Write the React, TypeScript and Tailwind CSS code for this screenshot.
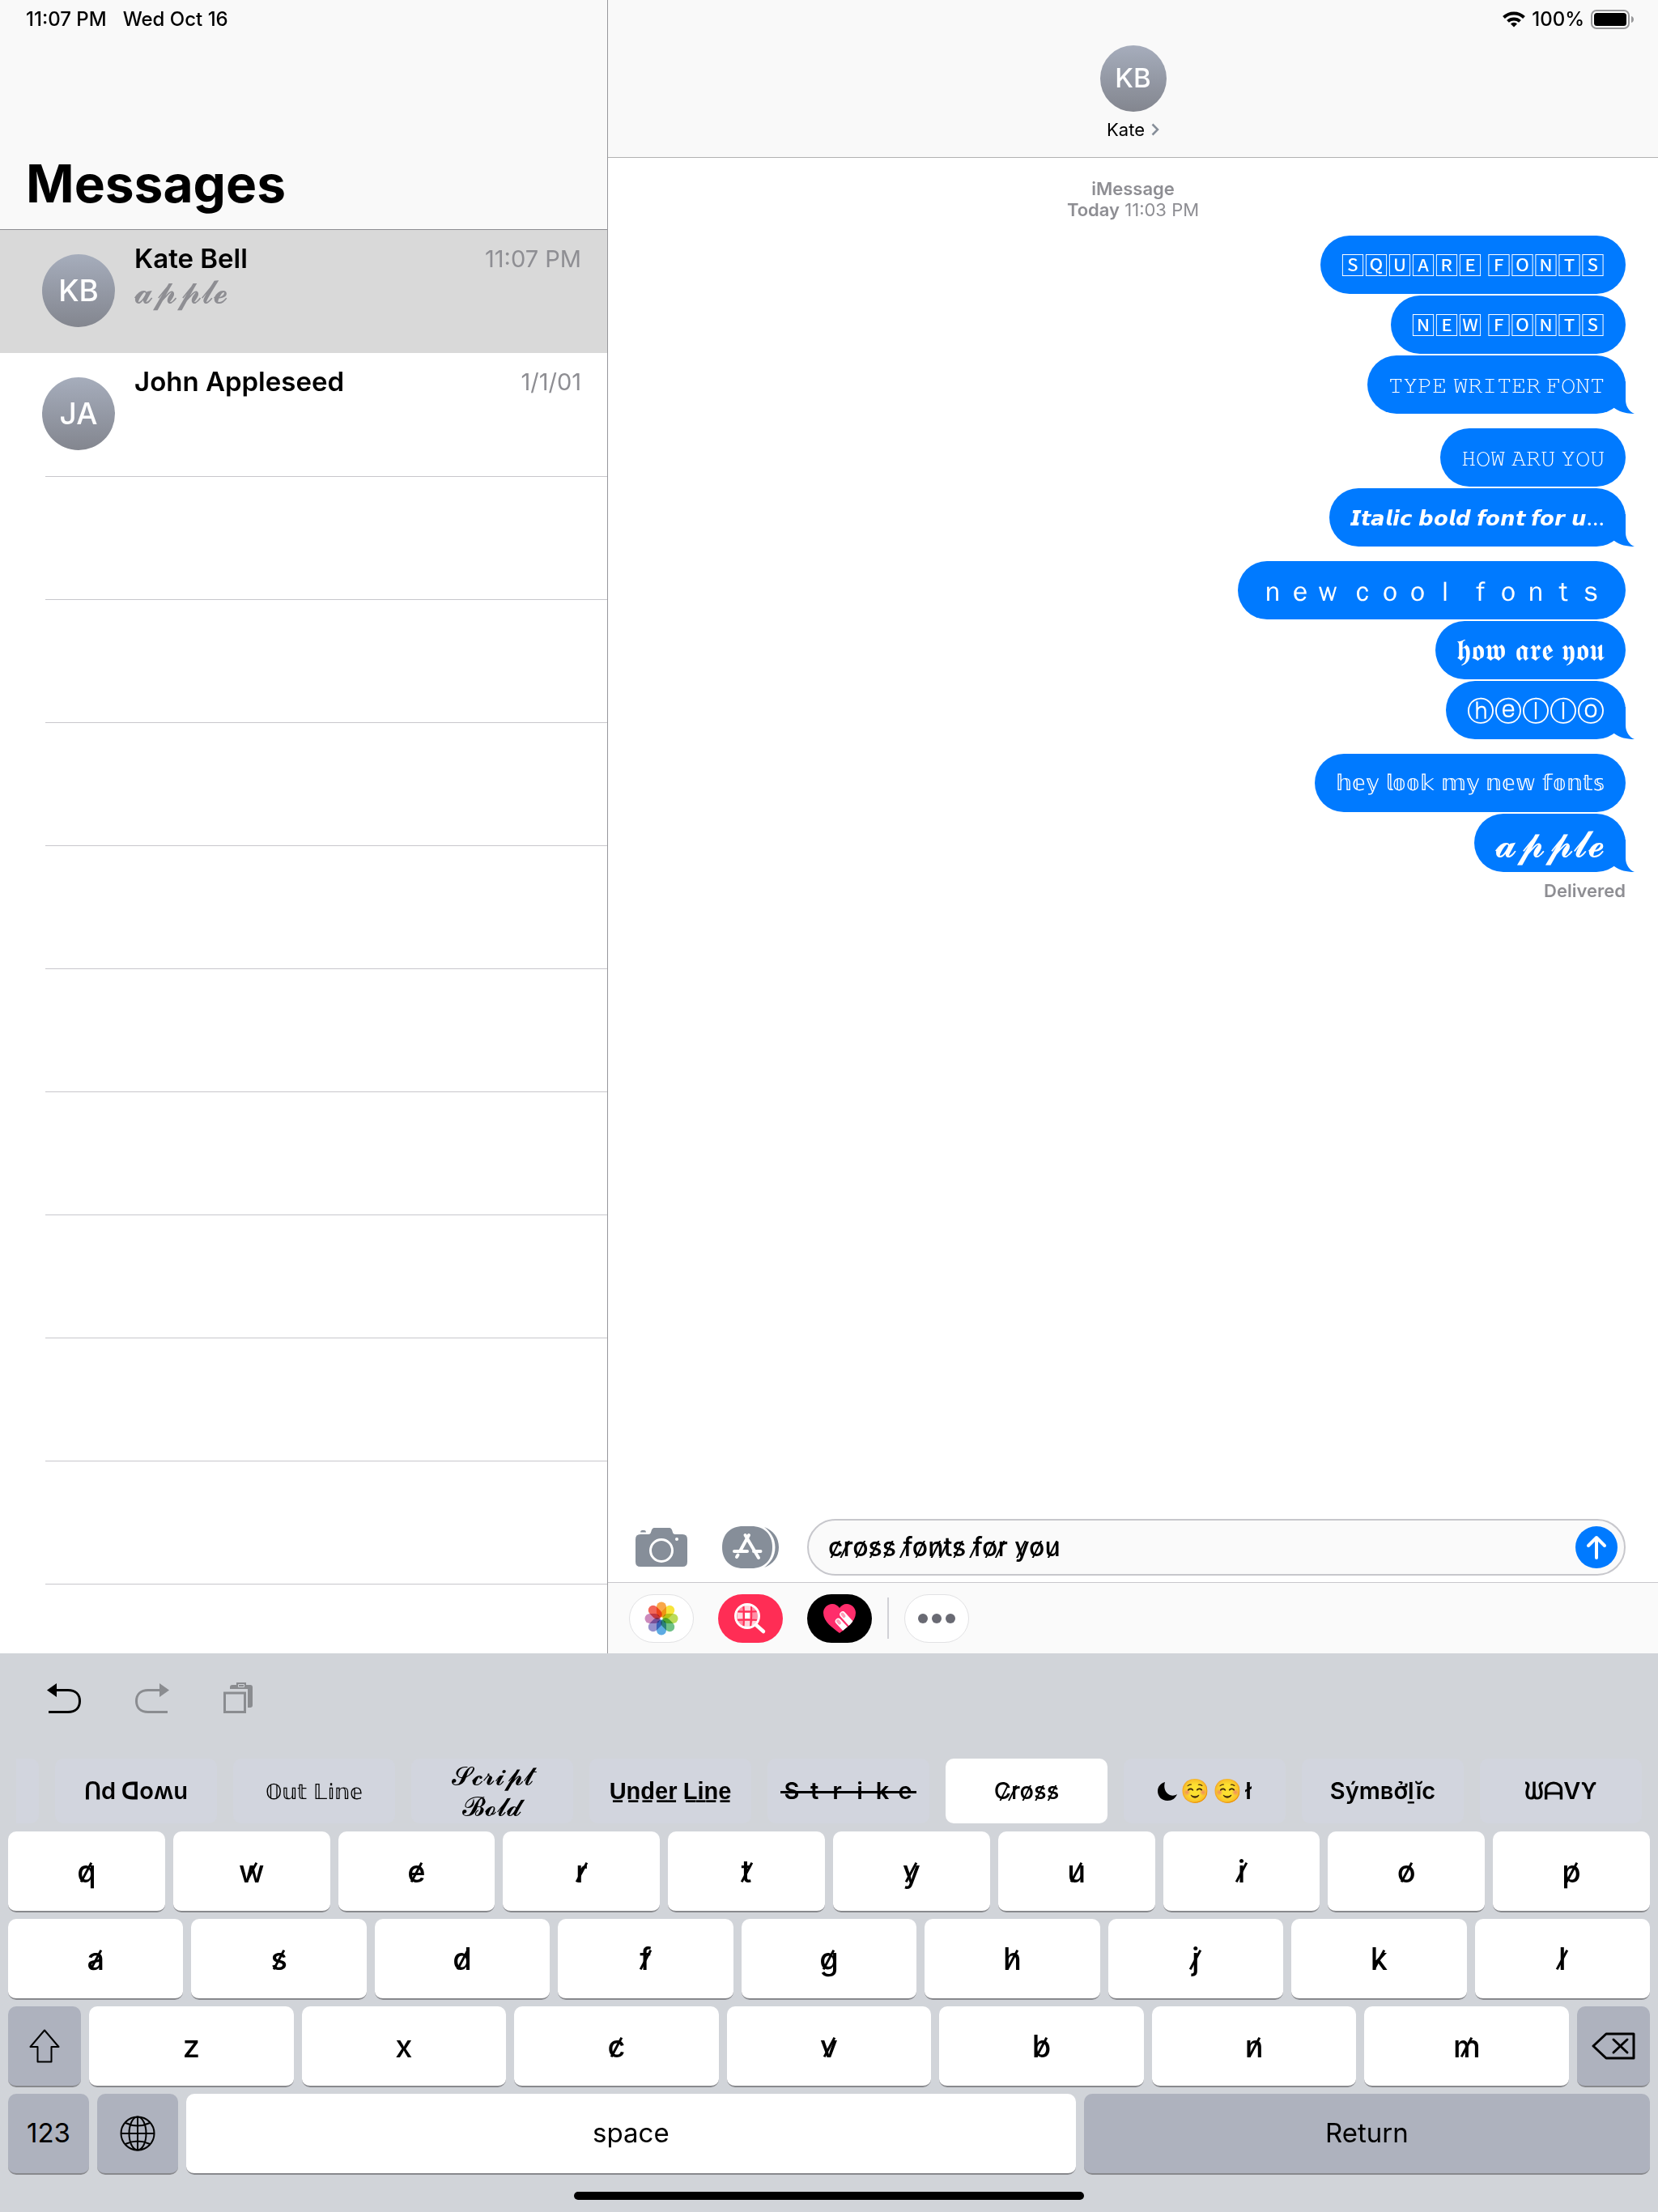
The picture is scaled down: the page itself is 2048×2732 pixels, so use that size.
import React, { useState } from 'react';
import clsx from 'clsx';

interface Conversation {
    id: string;
    initials: string;
    name: string;
    time: string;
    preview?: string;
}

interface Message {
    text: string;
    className: string;
}

const conversations: Conversation[] = [
    { id: 'kate', initials: 'KB', name: 'Kate Bell', time: '11:07 PM', preview: '𝓪𝓹𝓹𝓵𝓮' },
    { id: 'john', initials: 'JA', name: 'John Appleseed', time: '1/1/01' },
];

// Messages sent close together share a group, only the last one has a tail
const messageGroups: Message[][] = [
    [
        { text: '🅂🅀🅄🄰🅁🄴 🄵🄾🄽🅃🅂', className: "font-['Noto_Sans_CJK_JP',sans-serif] text-[29px]" },
        { text: '🄽🄴🅆 🄵🄾🄽🅃🅂', className: "font-['Noto_Sans_CJK_JP',sans-serif] text-[29px]" },
        { text: '𝚃𝚈𝙿𝙴 𝚆𝚁𝙸𝚃𝙴𝚁 𝙵𝙾𝙽𝚃', className: 'text-[26px]' },
    ],
    [
        { text: '𝙷𝙾𝚆 𝙰𝚁𝚄 𝚈𝙾𝚄', className: 'text-[26px]' },
        { text: '𝙄𝙩𝙖𝙡𝙞𝙘 𝙗𝙤𝙡𝙙 𝙛𝙤𝙣𝙩 𝙛𝙤𝙧 𝙪…', className: 'text-[26px]' },
    ],
    [
        { text: 'ｎｅｗ ｃｏｏｌ ｆｏｎｔｓ', className: 'text-[34px]' },
        { text: '𝖍𝖔𝖜 𝖆𝖗𝖊 𝖞𝖔𝖚', className: 'text-[37px]' },
        { text: 'ⓗⓔⓛⓛⓞ', className: 'text-[34px]' },
    ],
    [
        { text: '𝕙𝕖𝕪 𝕝𝕠𝕠𝕜 𝕞𝕪 𝕟𝕖𝕨 𝕗𝕠𝕟𝕥𝕤', className: 'text-[27px]' },
        { text: '𝓪𝓹𝓹𝓵𝓮', className: 'text-[46px]' },
    ],
];

const topRow = 'qwertyuiop'.split('');
const homeRow = 'asdfghjkl'.split('');
const bottomRow = 'zxcvbnm'.split('');
const uncrossed = ['z', 'x'];

const petals = ['#f9a03a', '#f6e22b', '#b5d84b', '#63bc7d', '#4fa4e1', '#8c88c9', '#c880b6', '#f1594b'];

const Avatar: React.FC<{ initials: string; className: string }> = ({ initials, className }) => (
    <div
        className={clsx(
            'shrink-0 rounded-full bg-linear-to-b from-[#a6adbc] to-[#83868f] text-white font-medium flex items-center justify-center',
            className
        )}
    >
        {initials}
    </div>
);

const ConversationRow: React.FC<{ conversation: Conversation; selected: boolean; onSelect: () => void }> = ({
    conversation,
    selected,
    onSelect,
}) => (
    <li>
        <button
            onClick={onSelect}
            className={clsx('w-full h-[152px] flex text-left pl-[52px]', selected ? 'bg-[#d9d9d9]' : 'bg-white')}
        >
            <Avatar initials={conversation.initials} className="size-[90px] mt-[30px] text-[37px]" />
            <div className="ml-6 pt-4 pr-8 flex-1 h-full">
                <div className="flex items-center justify-between h-10">
                    <span className="text-[33px] font-semibold text-black">{conversation.name}</span>
                    <span className="text-[29px] text-[#8e8e93]">{conversation.time}</span>
                </div>
                <p className="h-10 flex items-center text-[40px] text-[#8e8e93]">{conversation.preview}</p>
            </div>
        </button>
    </li>
);

const Sidebar: React.FC = () => {
    const [selected, setSelected] = useState('kate');

    return (
        <aside className="w-[36.67%] shrink-0 border-r border-[#98989c] flex flex-col bg-white">
            <header className="h-[284px] bg-[#f9f9f9] border-b border-[#8e8e93] flex flex-col justify-between pl-8 pb-4">
                <div className="h-12 flex items-center gap-5 text-2xl font-medium">
                    <span>11:07 PM</span>
                    <span>Wed Oct 16</span>
                </div>
                <h1 className="text-[64px] leading-[80px] font-bold">Messages</h1>
            </header>
            <ul>
                {conversations.map((c) => (
                    <ConversationRow
                        key={c.id}
                        conversation={c}
                        selected={selected === c.id}
                        onSelect={() => setSelected(c.id)}
                    />
                ))}
            </ul>
            {/* Empty rows */}
            <div className="ml-14 border-t border-[#c8c7cc]">
                {Array.from({ length: 9 }).map((_, i) => (
                    <div key={i} className="h-[152px] border-b border-[#c8c7cc]" />
                ))}
            </div>
        </aside>
    );
};

const Bubble: React.FC<{ message: Message; tail: boolean }> = ({ message, tail }) => (
    <div className="relative h-[72px] px-[26px] rounded-[36px] bg-[#007aff] text-white flex items-center whitespace-pre">
        {tail && (
            <svg className="absolute bottom-0 -right-[11px]" width="41" height="40" viewBox="-30 -40 41 40" fill="#007aff">
                <path d="M0 -40V-17C0 -9 5 -2 11 0C1 0 -7 -2 -14 -7L-30 -20V-40Z" />
            </svg>
        )}
        <span className={clsx('relative', message.className)}>{message.text}</span>
    </div>
);

const StatusIcons: React.FC = () => (
    <div className="h-12 w-full flex items-center justify-end gap-2 pr-[29px] text-2xl font-medium">
        <svg width="28" height="20" viewBox="0 0 28 20" fill="none" stroke="#000" strokeWidth="4">
            <path d="M1.5 7.5a18 18 0 0 1 25 0" />
            <path d="M6.5 12.4a11 11 0 0 1 15 0" />
            <path d="M14 19.5l-4-4a5.7 5.7 0 0 1 8 0z" fill="#000" stroke="none" />
        </svg>
        <span>100%</span>
        <svg width="54" height="24" viewBox="0 0 54 24">
            <rect x="1" y="1" width="46" height="22" rx="6" fill="none" stroke="#98989a" strokeWidth="2" />
            <rect x="4" y="4" width="40" height="16" rx="3.5" />
            <path d="M50 8c4 1 4 7 0 8z" fill="#98989a" />
        </svg>
    </div>
);

const CameraIcon: React.FC = () => (
    <svg width="64" height="48" viewBox="0 0 64 48" fill="#868e99">
        <path d="M6 5.5q0-2.5 2-2.5h3q2 0 2 2.5z" />
        <path d="M6 8h10c3 0 3-3 4-5.5C21 .5 22 0 24 0h17c2 0 3 .5 4 2.5C46 5 46 8 49 8h9q6 0 6 6v28q0 6-6 6H6q-6 0-6-6V14q0-6 6-6z" />
        <circle cx="32" cy="28" r="13.5" fill="none" stroke="#fff" strokeWidth="3" />
        <circle cx="51" cy="14" r="2" fill="#fff" />
    </svg>
);

const AppStoreIcon: React.FC = () => (
    <svg width="70" height="52" viewBox="0 0 70 52" fill="none">
        <path d="M52 1C63 5 70 14 70 26S63 47 52 51C60 45 65.5 37 65.5 26S60 7 52 1z" fill="#868e99" />
        <path d="M26 0h10C52 0 62 10 62 26S52 52 36 52H26C10 52 0 42 0 26S10 0 26 0z" fill="#868e99" />
        <path d="M33 11L22 31M19.5 35.5L18 38M28.5 11L45 39M15 31H31M39 31H47.5" stroke="#fff" strokeWidth="4" strokeLinecap="round" />
    </svg>
);

const PhotosIcon: React.FC = () => (
    <svg width="42" height="42" viewBox="-21 -21 42 42">
        {petals.map((color, i) => (
            <rect
                key={color}
                x="-6"
                y="-20.5"
                width="12"
                height="19"
                rx="6"
                fill={color}
                fillOpacity="0.92"
                transform={`rotate(${i * 45})`}
                className="mix-blend-multiply"
            />
        ))}
    </svg>
);

const ImageSearchIcon: React.FC = () => (
    <svg width="80" height="60" viewBox="0 0 80 60" fill="none">
        <circle cx="36" cy="27" r="14" fill="#ff8fa6" />
        <path d="M33 23h6v7h-6z" fill="#fff" />
        <path d="M33 14h7v6h-7zM24 23h6v7h-6zM43 32h5l-4 6h-3zM33 33h6v8h-6z" fill="#ffd5dd" />
        <path d="M31 13Q33 27 31 42M41 12Q42 27 40 42M22 21Q36 22 50 21M22 32Q36 31 50 32" stroke="#ff2d55" strokeWidth="2" />
        <circle cx="36" cy="27" r="14.5" stroke="#fff" strokeWidth="3" />
        <path d="M47 38L56 46" stroke="#fff" strokeWidth="4.5" strokeLinecap="round" />
    </svg>
);

const HeartIcon: React.FC = () => (
    <svg width="40" height="36" viewBox="0 0 40 36">
        <clipPath id="heart">
            <path d="M20 36C12 30 0 22 0 11C0 5 5 0 11 0c4 0 7 2 9 5c2-3 5-5 9-5c6 0 11 5 11 11c0 11-12 19-20 25z" />
        </clipPath>
        <g clipPath="url(#heart)">
            <rect width="40" height="36" fill="#ff2d6b" />
            <path d="M24 13L42 33M18.5 21.5L34 38" stroke="#fff" strokeWidth="7.5" strokeLinecap="round" />
            <path d="M23.5 12.5l2 2.5M18 21l2 2.5" stroke="#ff9db8" strokeWidth="4" strokeLinecap="round" />
        </g>
    </svg>
);

const Conversation: React.FC = () => {
    const [draft, setDraft] = useState('c̷r̷o̷s̷s̷ f̷o̷n̷t̷s̷ f̷o̷r̷ y̷o̷u̷');

    return (
        <section className="flex-1 min-w-0 flex flex-col bg-white">
            <header className="h-[195px] bg-[#f9f9f9] border-b border-[#b2b2b2] flex flex-col items-center">
                <StatusIcons />
                <Avatar initials="KB" className="size-[82px] mt-2 text-[33px]" />
                <button className="mt-[10px] h-6 flex items-center gap-2 text-[22px]">
                    Kate
                    <svg width="10" height="16" viewBox="0 0 10 16" fill="none" stroke="#868e99" strokeWidth="2.5">
                        <path d="M1.5 1.5L8 8l-6.5 6.5" />
                    </svg>
                </button>
            </header>

            <div className="flex-1 flex flex-col items-end pt-[25px] pr-10">
                <div className="self-center pl-10 mb-[19px] text-center text-[22px] leading-[26px] text-[#8e8e93]">
                    <p className="font-semibold">iMessage</p>
                    <p>
                        <span className="font-semibold">Today</span> 11:03 PM
                    </p>
                </div>
                <div className="flex flex-col gap-[18px]">
                    {messageGroups.map((group, g) => (
                        <div key={g} className="flex flex-col items-end gap-[2px]">
                            {group.map((message, i) => (
                                <Bubble key={message.text} message={message} tail={i === group.length - 1} />
                            ))}
                        </div>
                    ))}
                </div>
                <p className="mt-[10px] text-[22px] leading-[26px] font-semibold text-[#8e8e93]">Delivered</p>
            </div>

            <div className="flex items-center pl-[34px] pr-10 pb-2">
                <button aria-label="Camera">
                    <CameraIcon />
                </button>
                <button aria-label="Apps" className="ml-[43px]">
                    <AppStoreIcon />
                </button>
                <div className="ml-[35px] flex-1 h-[70px] flex items-center rounded-full border-2 border-[#c7c7cc] bg-[#fafafa] pl-6 pr-2">
                    <input
                        aria-label="iMessage"
                        value={draft}
                        onChange={(e) => setDraft(e.target.value)}
                        className="flex-1 min-w-0 bg-transparent outline-none text-[32px] font-medium text-black"
                    />
                    <button aria-label="Send" className="size-[52px] rounded-full bg-[#007aff] flex items-center justify-center">
                        <svg width="26" height="30" viewBox="0 0 26 30" fill="none" stroke="#fff" strokeWidth="4" strokeLinecap="round" strokeLinejoin="round">
                            <path d="M13 28V3M3 13L13 3l10 10" />
                        </svg>
                    </button>
                </div>
            </div>

            <div className="h-[88px] flex items-center pl-[26px] bg-[#fafafa] border-t border-[#c8c7cc]">
                <div className="flex gap-[30px]">
                    <button aria-label="Photos" className="w-20 h-[60px] rounded-full bg-white border border-[#e2e2e4] flex items-center justify-center">
                        <PhotosIcon />
                    </button>
                    <button aria-label="Images" className="w-20 h-[60px] rounded-full bg-[#ff2d55] overflow-hidden">
                        <ImageSearchIcon />
                    </button>
                    <button aria-label="Digital Touch" className="w-20 h-[60px] rounded-full bg-black flex items-center justify-center">
                        <HeartIcon />
                    </button>
                </div>
                <div className="w-[2px] h-[51px] mx-[19px] bg-[#d1d1d6]" />
                <button aria-label="More" className="w-20 h-[60px] rounded-full bg-white border border-[#e2e2e4] flex items-center justify-center gap-[5px]">
                    <span className="size-3 rounded-full bg-[#696a73]" />
                    <span className="size-3 rounded-full bg-[#696a73]" />
                    <span className="size-3 rounded-full bg-[#696a73]" />
                </button>
            </div>
        </section>
    );
};

const FontChip: React.FC<{ active?: boolean; className?: string; children?: React.ReactNode }> = ({
    active,
    className,
    children,
}) => (
    <button
        className={clsx(
            'w-[200px] h-20 shrink-0 rounded-[10px] flex items-center justify-center',
            active ? 'bg-white' : 'bg-[#d2d5de]',
            className
        )}
    >
        {children}
    </button>
);

const Key: React.FC<{ className?: string; label?: string; children: React.ReactNode }> = ({
    className = 'flex-1 bg-white text-[38px] font-medium',
    label,
    children,
}) => (
    <button
        aria-label={label}
        className={clsx('h-[100px] rounded-[10px] border-b-2 border-[#88898d] flex items-center justify-center text-black', className)}
    >
        {children}
    </button>
);

const LetterKey: React.FC<{ letter: string }> = ({ letter }) => (
    <Key>
        <span
            className={clsx(
                'relative',
                !uncrossed.includes(letter) &&
                    'after:absolute after:inset-x-0 after:top-4 after:mx-auto after:h-[27px] after:w-[3px] after:rotate-[28deg] after:bg-black'
            )}
        >
            {letter}
        </span>
    </Key>
);

const Keyboard: React.FC = () => (
    <div className="bg-[#d1d4d9] pt-9 pb-[15px]">
        <div className="h-10 flex items-start pl-[58px] gap-[67px] mb-[54px]">
            <button aria-label="Undo">
                <svg width="42" height="38" viewBox="0 0 42 38">
                    <path d="M10 9.5H26C35 9.5 40.5 14.5 40.5 23S35 36.5 26 36.5H2" fill="none" stroke="#000" strokeWidth="3" />
                    <path d="M0 9.5L12 1v17z" />
                </svg>
            </button>
            <button aria-label="Redo">
                <svg width="42" height="38" viewBox="0 0 42 38">
                    <path d="M32 9.5H16C7 9.5 1.5 14.5 1.5 23S7 36.5 16 36.5H40" fill="none" stroke="#8a8c90" strokeWidth="3" />
                    <path d="M42 9.5L30 1v17z" fill="#8a8c90" />
                </svg>
            </button>
            <button aria-label="Paste">
                <svg width="37" height="38" viewBox="0 0 37 38" fill="none">
                    <path d="M8 8V6q0-3 3-3h5V0h12v3h5q3 0 3 3v22q0 3-3 3h-3V8z" fill="#8a8c90" />
                    <path d="M18.5 2.5h7v3h-7z" stroke="#d1d4d9" strokeWidth="1" />
                    <rect x="1.5" y="13" width="25" height="23.5" stroke="#8a8c90" strokeWidth="3" />
                </svg>
            </button>
        </div>

        <div className="mx-5 mb-[10px] flex justify-end gap-5 overflow-hidden text-[29px] font-semibold">
            <FontChip />
            <FontChip>Ոd ᗡoʍu</FontChip>
            <FontChip className="text-[26px] font-normal">𝕆𝕦𝕥 𝕃𝕚𝕟𝕖</FontChip>
            <FontChip className="flex-col text-[32px] leading-[38px] font-normal">
                <span>𝓢𝓬𝓻𝓲𝓹𝓽</span>
                <span>𝓑𝓸𝓵𝓭</span>
            </FontChip>
            <FontChip>U̠n̠d̠e̠r̠ L̠i̠n̠e̠</FontChip>
            <FontChip>
                {'Strike'.split('').map((letter) => (
                    <span
                        key={letter}
                        className="relative w-7 text-center before:absolute before:inset-x-0 before:top-1/2 before:h-[3px] before:bg-black"
                    >
                        {letter}
                    </span>
                ))}
            </FontChip>
            <FontChip active className="font-medium">C̷r̷o̷s̷s̷</FontChip>
            <FontChip className="gap-1">
                <svg width="24" height="24" viewBox="0 0 24 24">
                    <path d="M9 1C3 3 0 7 0 12c0 7 5 12 12 12c6 0 10-3 12-8c-3 2-6 2-9 1c-6-3-8-9-6-16z" />
                </svg>
                <span>☺️</span>
                <span>☺️</span>
                <span>ł</span>
            </FontChip>
            <FontChip>Sýmвởḻĭc</FontChip>
            <FontChip>ᙎᗩVϒ</FontChip>
        </div>

        <div className="px-[10px] flex flex-col gap-2">
            <div className="flex gap-[10px]">
                {topRow.map((k) => (
                    <LetterKey key={k} letter={k} />
                ))}
            </div>
            <div className="flex gap-[10px]">
                {homeRow.map((k) => (
                    <LetterKey key={k} letter={k} />
                ))}
            </div>
            <div className="flex gap-[10px]">
                <Key label="Shift" className="w-[90px] bg-[#aeb2be]">
                    <svg width="38" height="42" viewBox="0 0 38 42" fill="none" stroke="#000" strokeWidth="2" strokeLinejoin="round">
                        <path d="M19 1.5L1.5 22H10.5V40.5H27.5V22H36.5Z" />
                    </svg>
                </Key>
                {bottomRow.map((k) => (
                    <LetterKey key={k} letter={k} />
                ))}
                <Key label="Delete" className="w-[90px] bg-[#aeb2be]">
                    <svg width="54" height="34" viewBox="0 0 54 34" fill="none" stroke="#000" strokeWidth="3" strokeLinecap="round" strokeLinejoin="round">
                        <path d="M18 2H52V32H18L2 17Z" />
                        <path d="M27 9l17 16M44 9L27 25" />
                    </svg>
                </Key>
            </div>
            <div className="flex gap-[10px]">
                <Key className="w-[100px] bg-[#aeb2be] text-[33px]">123</Key>
                <Key label="Next keyboard" className="w-[100px] bg-[#aeb2be]">
                    <svg width="44" height="44" viewBox="0 0 44 44" fill="none" stroke="#000" strokeWidth="2">
                        <circle cx="22" cy="22" r="20.5" />
                        <ellipse cx="22" cy="22" rx="10.5" ry="20.5" />
                        <path d="M22 1.5v41M1.5 22h41M7 9q15 7 30 0M7 35q15-7 30 0" />
                    </svg>
                </Key>
                <Key className="flex-[11] bg-white text-[33px]">space</Key>
                <Key className="flex-[7] bg-[#aeb2be] text-[33px]">Return</Key>
            </div>
        </div>

        {/* Home indicator */}
        <div className="mt-[21px] mx-auto h-[10px] w-[630px] rounded-full bg-black" />
    </div>
);

const App: React.FC = () => (
    <div className="min-h-screen flex flex-col bg-white text-black font-[Inter,sans-serif]">
        <main className="flex-1 flex">
            <Sidebar />
            <Conversation />
        </main>
        <Keyboard />
    </div>
);

export default App;
